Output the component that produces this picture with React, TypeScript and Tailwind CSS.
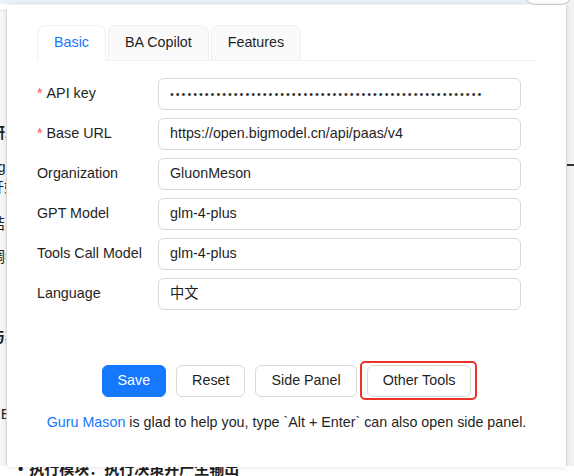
import React from "react";

const font = { fontFamily: '"Liberation Sans", "Noto Sans CJK SC", Arial, sans-serif' };

const rows = [
  { label: "API key", value: "•".repeat(54), required: true, secret: true },
  { label: "Base URL", value: "https://open.bigmodel.cn/api/paas/v4", required: true },
  { label: "Organization", value: "GluonMeson" },
  { label: "GPT Model", value: "glm-4-plus" },
  { label: "Tools Call Model", value: "glm-4-plus" },
  { label: "Language", value: "中文" },
];

function BackgroundPage() {
  return (
    <div className="w-full h-full flex flex-col text-[#1f1f1f]">
      <div className="h-[4px] bg-[#edf1f8] flex justify-end">
        <div className="w-[46px] h-[10px] -mt-[5px] mr-[3px] rounded-b-full border border-[#d0d0d0] bg-white" />
      </div>
      <div className="flex-1 flex">
        <div className="w-[7px] mt-[6px] border-t border-r border-[#e4e4e4] bg-[#f7f7f8] overflow-hidden">
          <div className="-ml-[10px] w-[200px] flex flex-col text-[15px] leading-[20px]">
            <div className="h-[112px]" />
            <div className="font-bold">研发</div>
            <div className="h-[14px]" />
            <div className="text-[14px]">ag</div>
            <div className="text-[14px]">开始</div>
            <div className="h-[17px]" />
            <div>结果</div>
            <div className="h-[13px]" />
            <div>调都</div>
            <div className="h-[60px]" />
            <div className="font-bold">与其</div>
            <div className="h-[57px]" />
            <div>RE</div>
          </div>
        </div>
        <div className="flex-1" />
        <div className="w-[8px] bg-[#f2f2f3] border-l border-[#e2e2e2] flex flex-col">
          <div className="h-[160px]" />
          <div className="h-[2px] bg-[#333]" />
        </div>
      </div>
      <div className="h-[10px] flex items-end pl-[18px] text-[15px] font-bold leading-[14px] overflow-hidden">
        <span className="mr-[6px]">•</span>
        <span>执行模块：执行决策并产生输出</span>
      </div>
    </div>
  );
}

export default function App() {
  return (
    <div className="relative w-[574px] h-[476px] overflow-hidden bg-white" style={font}>
      <BackgroundPage />

      <div className="absolute left-[7px] top-[5px] w-[559px] h-[462px] bg-white shadow-[0_0_6px_rgba(0,0,0,0.12)] px-[30px] pt-[20px] text-[#1f1f1f] text-[14.3px]">
        <div className="flex gap-[2px] border-b border-[#f0f0f0] h-[36px]">
          <div className="h-[36px] -mb-px px-4 flex items-center rounded-t-lg border border-[#f0f0f0] border-b-white bg-white text-[#1677ff]">
            Basic
          </div>
          <div className="h-[36px] -mb-px px-4 flex items-center rounded-t-lg border border-[#f0f0f0] bg-[#fafafa]">
            BA Copilot
          </div>
          <div className="h-[36px] -mb-px px-4 flex items-center rounded-t-lg border border-[#f0f0f0] bg-[#fafafa]">
            Features
          </div>
        </div>

        <div className="mt-[17px] flex flex-col gap-2">
          {rows.map(r => (
            <div key={r.label} className="flex items-center h-8">
              <div className="w-[121px] flex items-center">
                {r.required && <span className="text-[#ff4d4f] mr-[4px]">*</span>}
                <span>{r.label}</span>
              </div>
              <div className="w-[363px] h-8 border border-[#d9d9d9] rounded-md px-[11px] flex items-center">
                {r.secret ? (
                  <span className="text-[11px] tracking-[1.95px] leading-none text-[#333]">{r.value}</span>
                ) : (
                  <span>{r.value}</span>
                )}
              </div>
            </div>
          ))}
        </div>

        <div className="mt-[55px] flex justify-center items-center gap-[10px]">
          <button className="h-8 px-[15px] rounded-md bg-[#1677ff] text-white border border-[#1677ff]">Save</button>
          <button className="h-8 px-[15px] rounded-md bg-white border border-[#d9d9d9]">Reset</button>
          <button className="h-8 px-[15px] rounded-md bg-white border border-[#d9d9d9]">Side Panel</button>
          <div className="relative">
            <button className="h-8 px-[15px] rounded-md bg-white border border-[#d9d9d9]">Other Tools</button>
            <div className="absolute -left-[7px] -right-[6px] -top-[4px] -bottom-[3px] border-2 border-[#ec3224] rounded-[5px]" />
          </div>
        </div>

        <p className="mt-[14px] text-center leading-[22px]">
          <span className="text-[#1677ff]">Guru Mason</span> is glad to help you, type `Alt + Enter` can also open side panel.
        </p>
      </div>
    </div>
  );
}
